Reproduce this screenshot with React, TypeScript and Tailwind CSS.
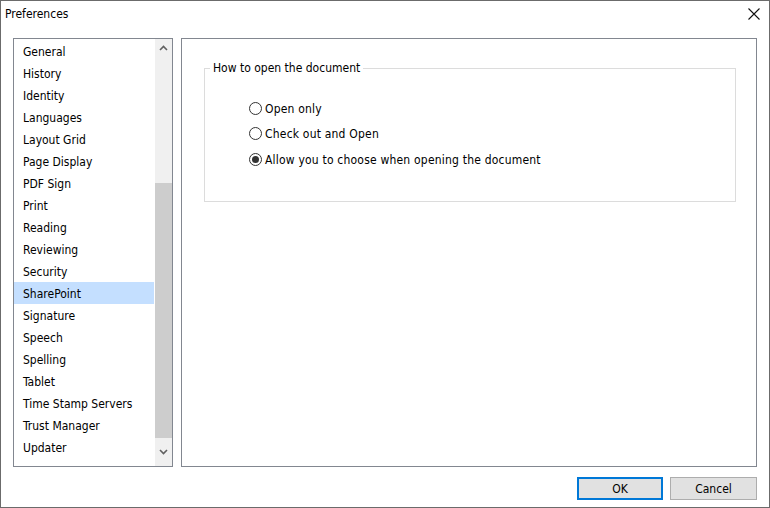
import React from "react";

const items = [
  "General","History","Identity","Languages","Layout Grid","Page Display","PDF Sign","Print","Reading","Reviewing","Security","SharePoint","Signature","Speech","Spelling","Tablet","Time Stamp Servers","Trust Manager","Updater",
];

function Radio({ label, checked }: { label: string; checked?: boolean }) {
  return (
    <div className="flex items-center h-[25px]">
      <span className="w-[13px] h-[13px] rounded-full border border-[#333] bg-white flex items-center justify-center mr-[3px]">
        {checked && <span className="w-[7px] h-[7px] rounded-full bg-[#333]" />}
      </span>
      <span className="tracking-[0.2px]">{label}</span>
    </div>
  );
}

export default function App() {
  return (
    <div
      className="w-[770px] h-[508px] border border-[#6b6b6b] bg-white flex flex-col text-[12px] text-black"
      style={{ fontFamily: '"DejaVu Sans Condensed", "DejaVu Sans", sans-serif' }}
    >
      <div className="h-[25px] flex items-center justify-between pl-[4px] pr-[9px]">
        <span>Preferences</span>
        <svg width="12" height="12" viewBox="0 0 12 12" className="mt-[1px]">
          <path d="M0.5 0.5 L11.5 11.5 M11.5 0.5 L0.5 11.5" stroke="#111" strokeWidth="1.1" />
        </svg>
      </div>
      <div className="flex mt-[12px] px-[12px] gap-[8px] h-[429px]">
        <div className="w-[160px] border border-[#828790] flex">
          <div className="flex-1 pt-[1px] mr-[1px]">
            {items.map((it) => (
              <div
                key={it}
                className={`h-[22px] flex items-center pl-[9px] pt-[2px] ${it === "SharePoint" ? "bg-[#c4dfff]" : ""}`}
              >
                {it}
              </div>
            ))}
          </div>
          <div className="w-[17px] bg-[#f0f0f0] flex flex-col">
            <div className="h-[17px] flex items-center justify-center">
              <svg width="9" height="6" viewBox="0 0 9 6"><path d="M1 5 L4.5 1.5 L8 5" stroke="#606060" strokeWidth="1.6" fill="none" /></svg>
            </div>
            <div className="mt-[127px] h-[255px] bg-[#cdcdcd]" />
            <div className="flex-1 flex items-center justify-center">
              <svg width="9" height="6" viewBox="0 0 9 6"><path d="M1 1 L4.5 4.5 L8 1" stroke="#606060" strokeWidth="1.6" fill="none" /></svg>
            </div>
          </div>
        </div>
        <div className="flex-1 border border-[#828790] pt-[20px] pl-[22px] pr-[20px]">
          <fieldset className="border border-[#dcdcdc] h-[143px] pl-[5px] pt-[19px]">
            <legend className="px-[3px]">How to open the document</legend>
            <div className="ml-[39px]">
              <Radio label="Open only" />
              <Radio label="Check out and Open" />
              <div className="mt-[1px]">
                <Radio label="Allow you to choose when opening the document" checked />
              </div>
            </div>
          </fieldset>
        </div>
      </div>
      <div className="flex justify-end gap-[7px] px-[12px] mt-[10px]">
        <button className="w-[86px] h-[23px] border-2 border-[#0078d7] bg-[#e1e1e1] flex items-center justify-center">OK</button>
        <button className="w-[87px] h-[23px] border border-[#adadad] bg-[#e1e1e1] flex items-center justify-center">Cancel</button>
      </div>
    </div>
  );
}
